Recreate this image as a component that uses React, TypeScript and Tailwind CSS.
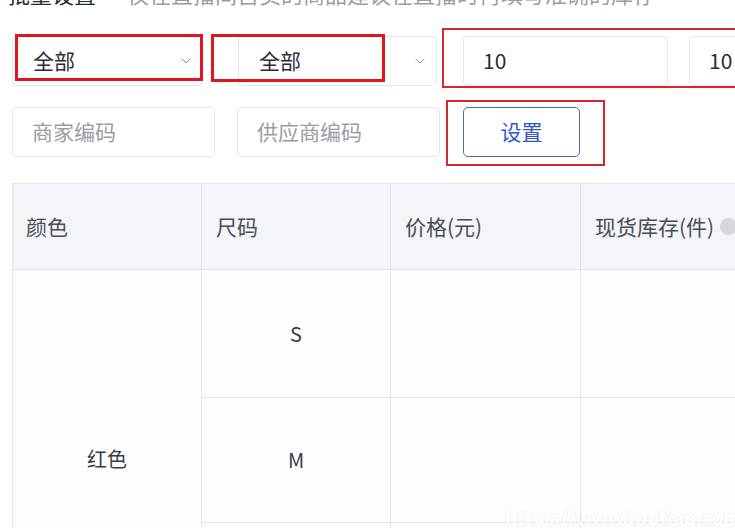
import { ChevronDown } from 'lucide-react';

const font = { fontFamily: '"Noto Sans CJK SC", "Noto Sans", sans-serif' };

function Select({ label, className }: { label: string; className: string }) {
  return (
    <div
      className={`flex h-[50px] items-center justify-between rounded-[4px] border border-[#e4e6eb] bg-white pl-[20px] pr-[8px] text-[21px] text-[#2b2b33] ${className}`}
    >
      <span>{label}</span>
      <ChevronDown size={16} strokeWidth={1.4} className="text-[#8a8d96]" />
    </div>
  );
}

function Field({ value, placeholder, className }: { value?: string; placeholder?: string; className: string }) {
  return (
    <div
      className={`flex h-[50px] items-center rounded-[4px] border border-[#e4e6eb] bg-white pl-[19px] text-[21px] ${className}`}
    >
      {value ? (
        <span className="text-[#2b2b33]">{value}</span>
      ) : (
        <span className="text-[#9a9ca4]">{placeholder}</span>
      )}
    </div>
  );
}

export default function App() {
  return (
    <div className="relative h-[528px] w-[735px] overflow-hidden bg-white" style={font}>
      {/* heading, cut at the top edge */}
      <div className="-mt-[18px] flex h-[22px] items-center gap-[31px] whitespace-nowrap pl-[8px] text-[22px] leading-[22px]">
        <span className="text-[#2b2b33]">批量设置</span>
        <span className="text-[#9a9ca4]">仅在直播间售卖的商品建议在直播时再填写准确的库存</span>
      </div>

      {/* filters */}
      <div className="mt-[32px] flex w-[1000px] items-center">
        <Select label="全部" className="ml-[12px] w-[191px]" />
        <Select label="全部" className="ml-[35px] w-[199px]" />
        <Field value="10" className="ml-[26px] w-[205px]" />
        <Field value="10" className="ml-[21px] w-[205px]" />
      </div>

      <div className="mt-[21px] flex items-center">
        <Field placeholder="商家编码" className="ml-[12px] w-[203px]" />
        <Field placeholder="供应商编码" className="ml-[22px] w-[203px]" />
        <button className="ml-[23px] flex h-[50px] w-[117px] items-center justify-center rounded-[5px] border-[1.5px] border-[#4a66ad] bg-white text-[21px] text-[#2f55c4]">
          设置
        </button>
      </div>

      {/* sku table */}
      <table className="ml-[12px] mt-[26px] w-[800px] table-fixed border-collapse text-[21px]">
        <colgroup>
          <col className="w-[189px]" />
          <col className="w-[189px]" />
          <col className="w-[190px]" />
          <col className="w-[232px]" />
        </colgroup>
        <thead>
          <tr className="h-[86px] bg-[#f3f5f9] text-left text-[#4a4c55]">
            <th className="border border-[#e2e5ea] pl-[13px] font-normal">颜色</th>
            <th className="border border-[#e2e5ea] pl-[14px] font-normal">尺码</th>
            <th className="border border-[#e2e5ea] pl-[14px] font-normal">价格(元)</th>
            <th className="whitespace-nowrap border border-[#e2e5ea] pl-[14px] font-normal">
              <span className="inline-flex items-center gap-[6px]">
                现货库存(件)
                <span className="inline-block h-[17px] w-[17px] rounded-full bg-[#d5d7dc]" />
              </span>
            </th>
          </tr>
        </thead>
        <tbody className="bg-[#fcfdff] text-center text-[20px] text-[#3a3c44]">
          <tr className="h-[128px]">
            <td rowSpan={3} className="border border-[#e2e5ea]">红色</td>
            <td className="border border-[#e2e5ea]">S</td>
            <td className="border border-[#e2e5ea]" />
            <td className="border border-[#e2e5ea]" />
          </tr>
          <tr className="h-[125px]">
            <td className="border border-[#e2e5ea]">M</td>
            <td className="border border-[#e2e5ea]" />
            <td className="border border-[#e2e5ea]" />
          </tr>
          <tr className="h-[125px]">
            <td className="border border-[#e2e5ea]">L</td>
            <td className="border border-[#e2e5ea]" />
            <td className="border border-[#e2e5ea]" />
          </tr>
        </tbody>
      </table>

      {/* red annotation frames */}
      <div className="pointer-events-none absolute left-[15px] top-[34px] h-[47px] w-[188px] border-[3px] border-[#e0161e]" />
      <div className="pointer-events-none absolute left-[211px] top-[34px] h-[48px] w-[174px] border-[3px] border-[#e0161e]" />
      <div className="pointer-events-none absolute left-[442px] top-[28px] h-[60px] w-[320px] border-2 border-[#d9252c]" />
      <div className="pointer-events-none absolute left-[446px] top-[100px] h-[66px] w-[159px] border-2 border-[#d9252c]" />

      {/* watermark */}
      <div className="pointer-events-none absolute left-[505px] top-[503px] whitespace-nowrap text-[19px] font-bold text-white [text-shadow:0_0_2px_rgba(0,0,0,0.12)]">
        https://www.toutiao.com
      </div>
    </div>
  );
}
